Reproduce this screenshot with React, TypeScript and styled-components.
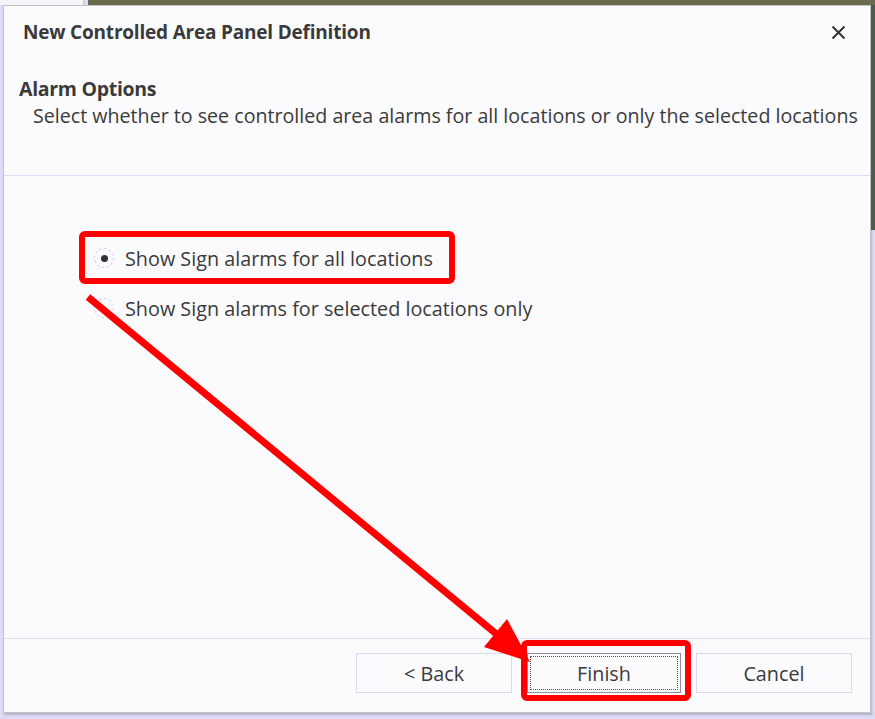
import React from "react";
import styled, { createGlobalStyle } from "styled-components";

const Global = createGlobalStyle`
  *, *::before, *::after { box-sizing: border-box; }
  html, body { margin: 0; padding: 0; }
  body {
    width: 875px;
    height: 719px;
    overflow: hidden;
    background: #dcdcf6;
    font-family: "Open Sans", "Noto Sans", sans-serif;
    color: #3a3a3a;
  }
`;

const Stage = styled.div`
  position: relative;
  width: 875px;
  height: 719px;
  display: flex;
  flex-direction: column;
`;

const BackdropStrip = styled.div`
  height: 5px;
  display: flex;
`;

const BackdropLight = styled.div`
  width: 84px;
  background: #f4f4fb;
  border-right: 1px solid #c8c8e0;
`;

const BackdropDark = styled.div`
  flex: 1;
  background: #6b6b52;
  margin-left: 4px;
`;

const Row = styled.div`
  display: flex;
  align-items: flex-start;
`;

const RightEdge = styled.div`
  width: 4px;
  height: 225px;
  background: #4f5a4c;
`;

const Dialog = styled.div`
  margin-left: 3px;
  width: 868px;
  height: 708px;
  background: #fbfbfe;
  border: 1px solid #c4c4c4;
  box-shadow: 1px 2px 2px rgba(0, 0, 0, 0.2);
  display: flex;
  flex-direction: column;
`;

const TitleBar = styled.div`
  height: 52px;
  display: flex;
  align-items: center;
  justify-content: space-between;
  padding: 0 23px 0 19px;
`;

const Title = styled.div`
  font-weight: 700;
  font-size: 19px;
  color: #3a3a3a;
  letter-spacing: -0.2px;
`;

const Close = styled.div`
  width: 18px;
  height: 18px;
  display: flex;
  align-items: center;
  justify-content: center;
`;

const Header = styled.div`
  height: 118px;
  border-bottom: 1px solid #dcdcf4;
  padding: 17px 0 0 15px;
`;

const Heading = styled.div`
  font-weight: 700;
  font-size: 19.5px;
  color: #3a3a3a;
  letter-spacing: -0.3px;
  line-height: 27px;
`;

const SubHeading = styled.div`
  font-size: 19.65px;
  line-height: 27px;
  padding-left: 14px;
  color: #3a3a3a;
  white-space: nowrap;
`;

const Body = styled.div`
  flex: 1;
  padding: 71px 0 0 90px;
  display: flex;
  flex-direction: column;
  gap: 28px;
`;

const Option = styled.label`
  display: flex;
  align-items: center;
  gap: 11px;
  font-size: 19.8px;
  height: 22px;
  color: #3a3a3a;
`;

const Radio = styled.span<{ $checked?: boolean }>`
  width: 20px;
  height: 20px;
  border-radius: 50%;
  border: 1px dashed #ccccef;
  display: flex;
  align-items: center;
  justify-content: center;
  &::after {
    content: "";
    width: 7px;
    height: 7px;
    border-radius: 50%;
    background: ${(p) => (p.$checked ? "#333338" : "transparent")};
  }
`;

const Footer = styled.div`
  height: 74px;
  border-top: 1px solid #dcdcf4;
  display: flex;
  justify-content: flex-end;
  align-items: flex-start;
  padding: 14px 18px 0 0;
  gap: 15px;
`;

const Button = styled.button<{ $default?: boolean }>`
  width: ${(p) => (p.$default ? 154 : 156)}px;
  height: 40px;
  font-family: inherit;
  font-size: 19.8px;
  color: #3a3a3a;
  background: #fbfbfe;
  border: 1px solid ${(p) => (p.$default ? "#8e8e96" : "#d8d8f4")};
  position: relative;
  padding: 0;
  ${(p) =>
    p.$default &&
    `
    &::before {
      content: "";
      position: absolute;
      inset: 2px;
      border: 1px dotted #555;
    }
  `}
`;

const Annotations = styled.svg`
  position: absolute;
  left: 0;
  top: 0;
  pointer-events: none;
`;

export default function App() {
  return (
    <>
      <Global />
      <Stage>
        <BackdropStrip>
          <BackdropLight />
          <BackdropDark />
        </BackdropStrip>
        <Row>
          <Dialog>
            <TitleBar>
              <Title>New Controlled Area Panel Definition</Title>
              <Close>
                <svg width="15" height="15" viewBox="0 0 15 15">
                  <path d="M1.5 1.5L13.5 13.5M13.5 1.5L1.5 13.5" stroke="#333" strokeWidth="2" />
                </svg>
              </Close>
            </TitleBar>
            <Header>
              <Heading>Alarm Options</Heading>
              <SubHeading>
                Select whether to see controlled area alarms for all locations or only the selected locations
              </SubHeading>
            </Header>
            <Body>
              <Option>
                <Radio $checked />
                Show Sign alarms for all locations
              </Option>
              <Option>
                <Radio />
                Show Sign alarms for selected locations only
              </Option>
            </Body>
            <Footer>
              <Button>&lt; Back</Button>
              <Button $default>Finish</Button>
              <Button>Cancel</Button>
            </Footer>
          </Dialog>
          <RightEdge />
        </Row>
        <Annotations width="875" height="719" viewBox="0 0 875 719">
          <rect x="82" y="234" width="370" height="47" rx="3" fill="none" stroke="#ff0000" strokeWidth="6" />
          <rect x="524" y="643" width="164" height="55" rx="3" fill="none" stroke="#ff0000" strokeWidth="6" />
          <line x1="88" y1="297" x2="500" y2="637" stroke="#ff0000" strokeWidth="7" />
          <polygon points="530,662 484,647 507,619" fill="#ff0000" />
        </Annotations>
      </Stage>
    </>
  );
}
